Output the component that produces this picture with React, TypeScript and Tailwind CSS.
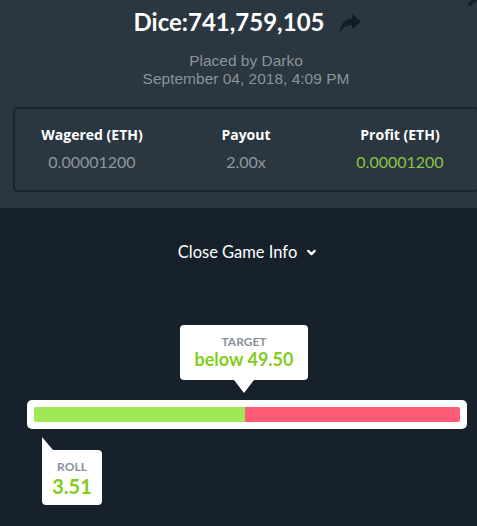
import React from 'react';
import { ChevronDown, X } from 'lucide-react';

const stats = [
  { label: 'Wagered (ETH)', value: '0.00001200', tone: 'text-[#8e969e]' },
  { label: 'Payout', value: '2.00x', tone: 'text-[#8e969e]' },
  { label: 'Profit (ETH)', value: '0.00001200', tone: 'text-[#8bc540]' },
];

const target = 49.5;

function ShareArrow() {
  return (
    <svg viewBox="0 0 20 18" className="mt-[2px] h-[19px] w-[21px] text-[#131c25]" fill="currentColor">
      <path d="M11.5 0 L20 7.2 L11.5 14.4 L11.5 10.4 C6 10.2 2.4 12.4 0 17.5 C0.4 9.4 4.6 4.6 11.5 4.2 Z" />
    </svg>
  );
}

export default function App() {
  return (
    <div className="h-[526px] w-full overflow-hidden bg-[#16212c] font-['Lato',sans-serif]">
      <div className="w-[492px]">
        {/* game summary */}
        <section className="relative h-[208px] bg-[#2a3640] pt-[7px]">
          <X className="absolute right-[4px] top-[-14px] h-6 w-6 text-[#16212c]" strokeWidth={4} />
          <div className="flex items-center justify-center gap-[15px] pl-[2px]">
            <h1 className="text-[24px] font-bold leading-[30px] text-white">Dice:741,759,105</h1>
            <ShareArrow />
          </div>
          <div className="mt-[15px] text-center font-['Liberation_Sans',sans-serif] text-[15.5px] leading-[18px] text-[#8a939b]">
            <p>Placed by Darko</p>
            <p>September 04, 2018, 4:09 PM</p>
          </div>
          <div className="mx-[13px] mt-[19px] grid grid-cols-3 rounded-[5px] border-2 border-[#1a242d] pb-[18px] pt-[16px] text-center">
            {stats.map((s) => (
              <div key={s.label}>
                <div className="font-['Open_Sans',sans-serif] text-[14px] font-bold leading-[20px] text-white">
                  {s.label}
                </div>
                <div className={`mt-[7px] text-[16px] leading-[20px] ${s.tone}`}>{s.value}</div>
              </div>
            ))}
          </div>
        </section>

        {/* toggle */}
        <button className="mx-auto mt-[34px] flex items-center gap-[8px] pl-[4px] text-[16.5px] leading-[20px] text-white">
          Close Game Info
          <ChevronDown className="h-[13px] w-[13px]" strokeWidth={4} />
        </button>

        {/* roll bar */}
        <div className="mt-[63px] flex flex-col items-center pr-[4px]">
          <div className="w-[128px] rounded-[4px] bg-white pb-[11px] pt-[10px] text-center">
            <div className="text-[12px] font-bold leading-[14px] text-[#8a909d]">TARGET</div>
            <div className="text-[18px] font-bold leading-[20px] text-[#82cc1c]">below 49.50</div>
          </div>
          <div className="h-0 w-0 border-x-[10px] border-t-[13px] border-x-transparent border-t-white" />
        </div>
        <div className="ml-[27px] mt-[7px] flex h-[29px] w-[440px] rounded-[5px] bg-white p-[7px]">
          <div className="h-full rounded-l-[2px] bg-[#a0e856]" style={{ width: `${target}%` }} />
          <div className="h-full flex-1 rounded-r-[2px] bg-[#ff5a76]" />
        </div>
        <div className="ml-[42px] mt-[8px] w-[60px]">
          <div className="h-0 w-0 border-l-[11px] border-t-[13px] border-l-white border-t-transparent" />
          <div className="rounded-b-[4px] rounded-tr-[4px] bg-white pb-[9px] pt-[10px] text-center">
            <div className="text-[12px] font-bold leading-[14px] text-[#8a909d]">ROLL</div>
            <div className="mt-[2px] text-[20px] font-bold leading-[20px] text-[#82cc1c]">3.51</div>
          </div>
        </div>
      </div>
    </div>
  );
}
